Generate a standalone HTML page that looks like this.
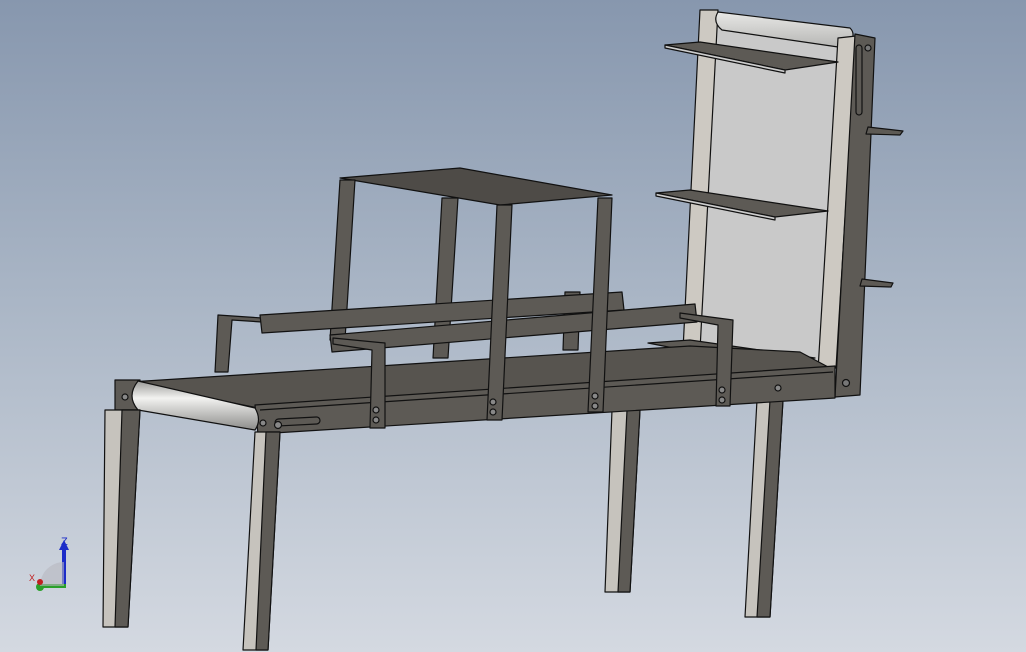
<!DOCTYPE html>
<html><head><meta charset="utf-8"><style>
html,body{margin:0;padding:0;width:1026px;height:652px;overflow:hidden}
body{background:linear-gradient(180deg,#8797ae 0%,#a9b5c5 45%,#d4d9e1 100%)}
svg{position:absolute;left:0;top:0}
</style></head><body>
<svg width="1026" height="652" viewBox="0 0 1026 652" stroke="#111" stroke-width="1.2" stroke-linejoin="round">
<defs>
<linearGradient id="rl" x1="0" y1="0" x2="0" y2="1"><stop offset="0" stop-color="#9a9a98"/><stop offset=".35" stop-color="#f2f2f0"/><stop offset="1" stop-color="#8c8c8a"/></linearGradient>
<linearGradient id="rt" x1="0" y1="0" x2="0" y2="1"><stop offset="0" stop-color="#e8e8e6"/><stop offset="1" stop-color="#b5b5b3"/></linearGradient>
</defs>
<!-- back legs -->
<polygon points="612,410 640,410 630,592 605,592" fill="#c6c3bd"/>
<polygon points="627,410 640,410 630,592 618,592" fill="#5d5a55"/>
<polygon points="757,400 783,400 770,617 745,617" fill="#c6c3bd"/>
<polygon points="770,400 783,400 770,617 757,617" fill="#5d5a55"/>
<!-- vertical conveyor -->
<polygon points="715,15 852,36 822,366 695,352" fill="#c9c9c9"/>
<polygon points="700,10 718,10 700,350 683,350" fill="#cdc9c2"/>
<path d="M718,12 Q712,22 722,30 L845,48 Q858,36 850,28 Z" fill="url(#rt)"/>
<polygon points="838,38 856,36 836,368 818,370" fill="#cdc9c2"/>
<polygon points="855,34 875,38 860,395 835,397" fill="#5d5a55"/>
<rect x="856" y="45" width="6" height="70" rx="3" fill="#5d5a55"/>
<circle cx="868" cy="48" r="3" fill="#777"/>
<circle cx="846" cy="383" r="3.5" fill="#777"/>
<!-- shelves -->
<polygon points="665,45 700,42 838,62 785,70" fill="#5d5a55"/>
<polygon points="665,45 785,70 785,73 665,48" fill="#ccc"/>
<polygon points="656,193 690,190 828,211 775,217" fill="#5d5a55"/>
<polygon points="656,193 775,217 775,220 656,196" fill="#ccc"/>
<polygon points="648,343 690,340 815,358 760,365" fill="#5d5a55"/>
<polygon points="868,127 903,131 900,135 866,134" fill="#5d5a55"/>
<polygon points="862,279 893,283 891,287 860,286" fill="#5d5a55"/>
<!-- top table -->
<polygon points="340,178 460,168 612,195 500,205" fill="#4e4b47"/>
<polygon points="340,180 355,180 345,340 330,340" fill="#5d5a55"/>
<polygon points="442,198 458,198 448,358 433,358" fill="#5d5a55"/>
<!-- side guards back -->
<polygon points="218,315 262,318 262,322 232,320 228,372 215,372" fill="#5d5a55"/>
<polygon points="565,292 580,292 578,350 563,350" fill="#5d5a55"/>
<!-- cross bars -->
<polygon points="260,315 622,292 624,310 262,333" fill="#5d5a55"/>
<polygon points="330,335 695,304 697,322 332,352" fill="#5d5a55"/>
<!-- belt top -->
<polygon points="130,382 690,346 800,352 830,368 258,408" fill="#57544f"/>
<!-- rails -->
<polygon points="255,405 835,366 835,398 258,434" fill="#5d5a55"/>
<polygon points="115,380 140,380 140,410 115,410" fill="#5d5a55"/>
<line x1="260" y1="410" x2="833" y2="372"/>
<!-- left roller -->
<path d="M138,381 L255,408 Q262,420 255,430 L138,410 Q126,396 138,381 Z" fill="url(#rl)"/>
<rect x="275" y="418" width="45" height="7" rx="3.5" fill="#5d5a55" transform="rotate(-3 297 421)"/>
<circle cx="278" cy="425" r="3.5" fill="#888"/>
<circle cx="263" cy="423" r="3" fill="#888"/>
<circle cx="125" cy="397" r="3" fill="#888"/>
<!-- front legs -->
<polygon points="105,410 140,410 128,627 103,627" fill="#c6c3bd"/>
<polygon points="122,410 140,410 128,627 115,627" fill="#5d5a55"/>
<polygon points="255,432 280,432 268,650 243,650" fill="#c6c3bd"/>
<polygon points="266,432 280,432 268,650 256,650" fill="#5d5a55"/>
<!-- front posts and brackets -->
<polygon points="497,205 512,205 502,420 487,420" fill="#5d5a55"/>
<polygon points="598,198 612,198 603,412 588,412" fill="#5d5a55"/>
<polygon points="333,338 385,343 385,428 370,428 372,350 333,344" fill="#5d5a55"/>
<polygon points="680,313 733,320 730,406 716,406 718,325 680,318" fill="#5d5a55"/>
<g fill="#888"><circle cx="376" cy="410" r="3"/><circle cx="376" cy="420" r="3"/><circle cx="493" cy="402" r="3"/><circle cx="493" cy="412" r="3"/><circle cx="595" cy="396" r="3"/><circle cx="595" cy="406" r="3"/><circle cx="722" cy="390" r="3"/><circle cx="722" cy="400" r="3"/><circle cx="778" cy="388" r="3"/></g>
<!-- triad -->
<g stroke="none">
<rect x="62" y="548" width="4" height="38" fill="#1c2cc8"/>
<polygon points="59,550 69,550 64,540" fill="#1c2cc8"/>
<rect x="40" y="584" width="26" height="4" fill="#2aa02a"/>
<circle cx="40" cy="587" r="4" fill="#2aa02a"/>
<path d="M64,586 L40,586 A24,24 0 0 1 64,562 Z" fill="#b8b8c0" opacity=".6"/>
<circle cx="40" cy="582" r="3" fill="#c02020"/>
</g>
<text x="61" y="545" font-family="Liberation Sans,sans-serif" font-size="11" fill="#1c2cc8" stroke="none">Z</text>
<text x="29" y="581" font-family="Liberation Sans,sans-serif" font-size="9" fill="#c02020" stroke="none">X</text>
</svg>
</body></html>
